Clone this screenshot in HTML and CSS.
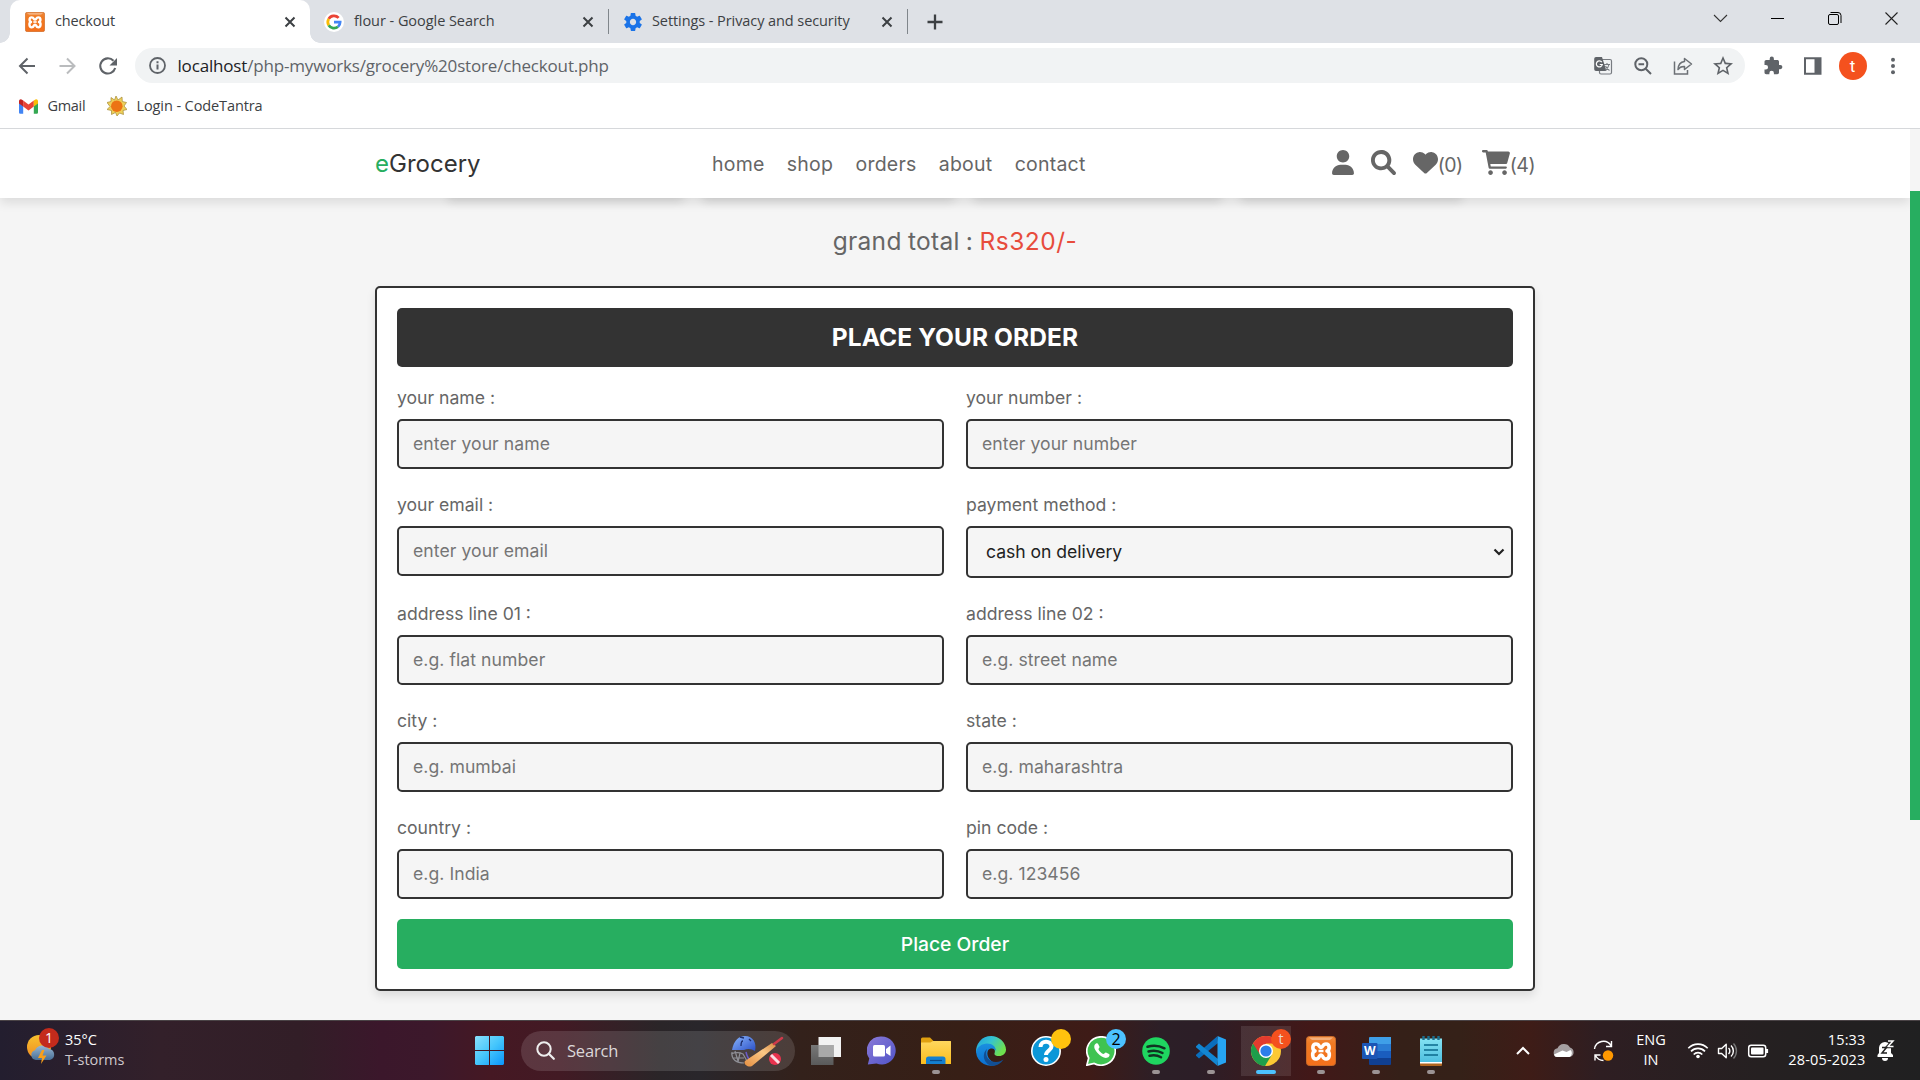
FILE: index.html
```html
<!DOCTYPE html>
<html lang="en">
<head>
<meta charset="utf-8">
<title>checkout</title>
<link rel="stylesheet" href="styles.css">
</head>
<body>
<svg class="defs" width="0" height="0">
  <defs>
    <linearGradient id="xg" x1="0" y1="0" x2="0" y2="1"><stop offset="0" stop-color="#f08a3c"/><stop offset=".25" stop-color="#f07a22"/><stop offset="1" stop-color="#f4701c"/></linearGradient>
    <linearGradient id="win" x1="0" y1="0" x2="1" y2="1"><stop offset="0" stop-color="#8ae0fc"/><stop offset=".5" stop-color="#45c6fc"/><stop offset="1" stop-color="#0a95fb"/></linearGradient>
    <linearGradient id="sunny" x1="0" y1="0" x2="0" y2="1"><stop offset="0" stop-color="#f8c22e"/><stop offset="1" stop-color="#ef8a22"/></linearGradient>
    <linearGradient id="cloudg" x1="0" y1="0" x2="0" y2="1"><stop offset="0" stop-color="#9ab8d4"/><stop offset="1" stop-color="#476e96"/></linearGradient>
    <linearGradient id="helmet" x1="0" y1="0" x2="1" y2="1"><stop offset="0" stop-color="#8ab6fb"/><stop offset="1" stop-color="#2b50c8"/></linearGradient>
    <linearGradient id="bat" x1="0" y1="1" x2="1" y2="0"><stop offset="0" stop-color="#e58f42"/><stop offset=".6" stop-color="#fbc886"/><stop offset="1" stop-color="#d98b45"/></linearGradient>
    <linearGradient id="grey" x1="0" y1="0" x2="0" y2="1"><stop offset="0" stop-color="#787878"/><stop offset="1" stop-color="#5a5a5a"/></linearGradient>
    <linearGradient id="chatg" x1="0" y1="0" x2="1" y2="1"><stop offset="0" stop-color="#8b7ad8"/><stop offset="1" stop-color="#5054c8"/></linearGradient>
    <linearGradient id="folder" x1="0" y1="0" x2="0" y2="1"><stop offset="0" stop-color="#ffd75e"/><stop offset="1" stop-color="#fbbd1e"/></linearGradient>
    <linearGradient id="edge1" x1="0" y1="0" x2="1" y2=".5"><stop offset="0" stop-color="#1f9fe0"/><stop offset=".5" stop-color="#35c4d0"/><stop offset="1" stop-color="#6fe04e"/></linearGradient>
    <linearGradient id="edge2" x1="0" y1="0" x2="0" y2="1"><stop offset="0" stop-color="#1a8fe0"/><stop offset="1" stop-color="#0b6fd0"/></linearGradient>
    <linearGradient id="note" x1="0" y1="0" x2="0" y2="1"><stop offset="0" stop-color="#84e2f2"/><stop offset="1" stop-color="#4fbfe0"/></linearGradient>
    <symbol id="xampp" viewBox="0 0 30 30">
      <rect x=".5" y=".5" width="29" height="29" rx="3" fill="url(#xg)" stroke="#c96a28"/>
      <path d="M3 1.5h24L24 4H6z" fill="#fff" opacity=".35"/>
      <path d="M10 8c-4 0-4 6-1 7-3.500 1-3 8 1 8 4 0 2.500-4 5-4s1 4 5 4 4.500-7 1-8c3-1 3-7-1-7-4 0-2.500 3.500-5 3.500S14 8 10 8z" fill="none" stroke="#fff" stroke-width="3.600" stroke-linejoin="round"/>
      <path d="M12.500 15h5" stroke="#fff" stroke-width="2.500"/>
    </symbol>
    <symbol id="x" viewBox="0 0 12 12"><path d="M1.500 1.500l9 9M10.500 1.500l-9 9" stroke="#3c4043" stroke-width="2"/></symbol>
  </defs>
</svg>

<div class="tabstrip">
  <div class="tab tab-active">
    <svg class="fav" width="20" height="20"><use href="#xampp"/></svg>
    <span class="tab-title">checkout</span>
    <svg width="12" height="12"><use href="#x"/></svg>
  </div>
  <div class="tab tab-line">
    <svg class="fav" width="20" height="20" viewBox="0 0 20 20"><circle cx="10" cy="10" r="10" fill="#fff"/><g fill="none" stroke-width="2.800"><path d="M14.600 5.900A6.200 6.200 0 0 0 4.700 6.900" stroke="#ea4335"/><path d="M4.700 6.900a6.200 6.200 0 0 0 0 6.300" stroke="#fbbc05"/><path d="M4.700 13.200a6.200 6.200 0 0 0 9.300 1.500" stroke="#34a853"/><path d="M14 14.700a6.200 6.200 0 0 0 2.100-4.500H10" stroke="#4285f4"/></g></svg>
    <span class="tab-title">flour - Google Search</span>
    <svg width="12" height="12"><use href="#x"/></svg>
  </div>
  <div class="tab tab-line">
    <svg class="fav" width="18" height="18" viewBox="2 2 20 20"><path fill="#1a73e8" d="M19.430 12.980c.04-.32.07-.64.07-.98s-.03-.66-.07-.98l2.110-1.650c.19-.15.24-.42.12-.64l-2-3.460c-.12-.22-.39-.3-.61-.22l-2.490 1c-.52-.4-1.080-.73-1.690-.98l-.38-2.650C14.460 2.180 14.250 2 14 2h-4c-.25 0-.46.18-.49.42l-.38 2.650c-.61.25-1.170.59-1.690.98l-2.490-1c-.23-.09-.49 0-.61.22l-2 3.460c-.13.22-.07.49.12.64l2.110 1.650c-.04.32-.07.65-.07.98s.03.66.07.98l-2.110 1.650c-.19.15-.24.42-.12.64l2 3.460c.12.22.39.3.61.22l2.490-1c.52.4 1.080.73 1.690.98l.38 2.650c.03.24.24.42.49.42h4c.25 0 .46-.18.49-.42l.38-2.650c.61-.25 1.170-.59 1.690-.98l2.490 1c.23.09.49 0 .61-.22l2-3.460c.12-.22.07-.49-.12-.64l-2.110-1.650zM12 15.500c-1.930 0-3.500-1.570-3.500-3.500s1.570-3.500 3.500-3.500 3.500 1.570 3.500 3.500-1.570 3.500-3.500 3.500z"/></svg>
    <span class="tab-title">Settings - Privacy and security</span>
    <svg width="12" height="12"><use href="#x"/></svg>
  </div>
  <svg class="newtab" width="16" height="16" viewBox="0 0 16 16"><path d="M8 .5v15M.5 8h15" stroke="#3c4043" stroke-width="2.300"/></svg>
  <div class="win-controls">
    <svg width="57" height="37"><path d="M22 15l6.500 6.500L35 15" fill="none" stroke="#333" stroke-width="1.100"/></svg>
    <svg width="57" height="37"><path d="M22 18.500h13" stroke="#000" stroke-width="1"/></svg>
    <svg width="57" height="37"><rect x="22.500" y="14.500" width="10" height="10" rx="1.500" fill="none" stroke="#000"/><path d="M24.500 12.500h7.500a3 3 0 0 1 3 3v7.500" fill="none" stroke="#000"/></svg>
    <svg width="57" height="37"><path d="M22.500 12.500l12 12M34.500 12.500l-12 12" stroke="#222" stroke-width="1.100"/></svg>
  </div>
</div>

<div class="toolbar">
  <svg class="nav-btn" viewBox="0 0 40 40"><path d="M35 20H20.500M27.500 12.500L20 20l7.500 7.500" fill="none" stroke="#5f6368" stroke-width="2"/></svg>
  <svg class="nav-btn" viewBox="0 0 40 40"><path d="M19.500 20H34M27 12.500l7.500 7.500-7.500 7.500" fill="none" stroke="#babcbe" stroke-width="2"/></svg>
  <svg class="nav-btn" viewBox="-1 0 40 40"><path d="M32.500 14.800A7.600 7.600 0 1 0 34.200 22" fill="none" stroke="#5f6368" stroke-width="2.100"/><path d="M36 12v7.500h-7.500z" fill="#5f6368"/></svg>
  <div class="omnibox">
    <svg width="17" height="17" viewBox="0 0 17 17"><circle cx="8.500" cy="8.500" r="7.500" fill="none" stroke="#5f6368" stroke-width="1.800"/><path d="M8.500 7.500v5M8.500 4.200v2" stroke="#5f6368" stroke-width="2"/></svg>
    <span class="url"><b>localhost</b>/php-myworks/grocery%20store/checkout.php</span>
    <svg class="obi" viewBox="0 0 20 20"><rect x="6.500" y="3.500" width="12" height="14.500" rx="1.500" fill="none" stroke="#777b80" stroke-width="1.200"/><path d="M3 1h6l4.500 14H3a1.800 1.800 0 0 1-1.800-1.800V2.800A1.800 1.800 0 0 1 3 1z" fill="#5f6368"/><path d="M8.800 6.200a3 3 0 1 0 .5 2.300H6.700" fill="none" stroke="#fff" stroke-width="1.200"/><path d="M11 8.500h6M14 7v1.500M16 8.500c-.5 3-2 4.500-4 6M12.500 10c1 2 2.500 3.500 4 4.500" fill="none" stroke="#777b80" stroke-width="1.100"/></svg>
    <svg class="obi" viewBox="0 0 20 20"><circle cx="8.300" cy="8.300" r="6" fill="none" stroke="#5f6368" stroke-width="2"/><path d="M5.500 8.300h5.600M12.700 12.700l5.300 5.300" stroke="#5f6368" stroke-width="2"/></svg>
    <svg class="obi" viewBox="0 0 20 20"><path d="M1.500 5.500v12.500h13v-4" fill="none" stroke="#6c7075" stroke-width="1.500"/><path d="M11.500 2.500l7 5.500-7 5.500v-3c-3-.2-5 .7-6.500 3 .2-4.500 2-7.500 6.500-8z" fill="none" stroke="#6c7075" stroke-width="1.500" stroke-linejoin="round"/></svg>
    <svg class="obi" viewBox="2 2 20 20"><path fill="#5f6368" d="M22 9.240l-7.190-.62L12 2 9.190 8.630 2 9.240l5.460 4.730L5.820 21 12 17.270 18.180 21l-1.630-7.030L22 9.240zM12 15.400l-3.760 2.270 1-4.280-3.320-2.880 4.380-.38L12 6.100l1.710 4.040 4.380.38-3.320 2.880 1 4.280L12 15.400z"/></svg>
  </div>
  <div class="tool-right">
    <svg width="40" height="20" viewBox="-8.700 1.500 40 20"><path fill="#5f6368" d="M18.600 10.500h-1.300V7.200c0-1-.8-1.700-1.700-1.700h-3.400V4.200a2.100 2.100 0 0 0-4.200 0v1.300H4.500c-.9 0-1.700.8-1.700 1.700v3.200h1.300a2.250 2.250 0 0 1 0 4.500H2.800V18c0 1 .8 1.700 1.700 1.700h3.200v-1.300a2.250 2.250 0 0 1 4.500 0v1.300h3.400c.9 0 1.700-.8 1.700-1.700v-3.300h1.300a2.100 2.100 0 0 0 0-4.200z"/></svg>
    <svg width="40" height="20"><path d="M12 2.300h15.500v15.400H12z" fill="none" stroke="#5f6368" stroke-width="2"/><path d="M21.500 2h6v16h-6z" fill="#5f6368"/></svg>
    <span class="avatar">t</span>
    <svg width="40" height="20"><g fill="#5f6368"><circle cx="20" cy="3.800" r="2"/><circle cx="20" cy="10" r="2"/><circle cx="20" cy="16.200" r="2"/></g></svg>
  </div>
</div>

<div class="bookmarks">
  <svg width="19" height="15" viewBox="0 0 19 15"><path d="M0 2v11.500a1.200 1.200 0 0 0 1.200 1.200h3V5.500z" fill="#4285f4"/><path d="M19 2v11.500a1.200 1.200 0 0 1-1.200 1.200h-3V5.500z" fill="#34a853"/><path d="M4.200 1.600v6l5.300 4 5.300-4v-6l-5.300 4z" fill="#ea4335"/><path d="M0 2.200C0 .2 2 -.4 3.400.9l.8.7v6L0 4.500z" fill="#c5221f"/><path d="M19 2.200C19 .2 17-.4 15.600.9l-.8.7v6L19 4.500z" fill="#fbbc04"/></svg>
  <span class="bm-gmail">Gmail</span>
  <svg width="20" height="20" viewBox="0 0 20 20"><path d="M9 0l2 4 4-3 .3 4.500 4.200 1-2.500 3.500 3 3.500-4 1 .5 4-4-1.500-2.500 3-1.500-3.500-4 2 0-4L0 13.500l3-3L0 6.500l4-1V1.500L7.500 4z" fill="#eed05a" stroke="#a58a35" stroke-width=".7"/><circle cx="9.800" cy="10.200" r="5.800" fill="#ec7414"/></svg>
  <span class="bm-login">Login - CodeTantra</span>
</div>

<div class="viewport">
  <div class="page">
    <header class="header">
      <div class="header-in">
        <div class="logo"><span>e</span>Grocery</div>
        <nav class="nav"><a>home</a><a>shop</a><a>orders</a><a>about</a><a>contact</a></nav>
        <div class="icons">
          <svg width="22" height="25" viewBox="0 0 448 512"><path d="M224 256c70.700 0 128-57.310 128-128s-57.300-128-128-128C153.300 0 96 57.310 96 128S153.300 256 224 256zM274.700 304H173.300C77.610 304 0 381.600 0 477.300c0 19.140 15.520 34.670 34.660 34.670h378.700C432.500 512 448 496.500 448 477.300C448 381.600 370.400 304 274.700 304z"/></svg>
          <svg class="i-search" width="25" height="25" viewBox="0 0 512 512"><path d="M500.300 443.700l-119.700-119.700c27.220-40.410 40.650-90.900 33.460-144.700C401.800 87.790 326.800 13.320 235.200 1.723C99.010-15.510-15.510 99.010 1.724 235.200c11.600 91.640 86.080 166.700 177.600 178.900c53.800 7.189 104.300-6.236 144.700-33.460l119.700 119.700c15.620 15.620 40.950 15.620 56.570 0C515.900 484.700 515.900 459.300 500.300 443.700zM79.100 208c0-70.580 57.420-128 128-128s128 57.420 128 128c0 70.580-57.420 128-128 128S79.100 278.600 79.100 208z"/></svg>
          <a><svg width="25" height="25" viewBox="0 0 512 512"><path d="M0 190.900V185.100C0 115.200 50.520 55.580 119.400 44.100C164.100 36.510 211.400 51.370 244 84.020L256 96L267.100 84.020C300.600 51.370 347 36.510 392.600 44.100C461.500 55.580 512 115.200 512 185.100V190.900C512 232.400 494.800 272.100 464.400 300.400L283.700 469.100C276.200 476.100 266.300 480 256 480C245.700 480 235.800 476.100 228.300 469.100L47.590 300.400C17.230 272.100 0 232.400 0 190.900z"/></svg><span>(0)</span></a>
          <a class="cart"><svg width="28" height="25" viewBox="0 0 576 512"><path d="M96 0C107.500 0 117.400 8.190 119.600 19.510L121.100 32H541.800C562.100 32 578.300 52.250 572.600 72.660L518.600 264.700C514.700 278.500 502.100 288 487.800 288H170.700L179.900 336H488C501.300 336 512 346.700 512 360C512 373.300 501.300 384 488 384H159.100C148.500 384 138.600 375.800 136.400 364.500L76.140 48H24C10.750 48 0 37.250 0 24C0 10.750 10.750 0 24 0H96zM128 464C128 437.500 149.500 416 176 416C202.500 416 224 437.500 224 464C224 490.500 202.500 512 176 512C149.500 512 128 490.500 128 464zM512 464C512 490.500 490.500 512 464 512C437.500 512 416 490.500 416 464C416 437.500 437.500 416 464 416C490.500 416 512 437.500 512 464z"/></svg><span>(4)</span></a>
        </div>
      </div>
    </header>
    <div class="cards"><div></div><div></div><div></div><div></div></div>
    <p class="total">grand total : <span>Rs320/-</span></p>
    <form class="order">
      <h3>PLACE YOUR ORDER</h3>
      <div class="fields">
        <label>your name :<input type="text" placeholder="enter your name"></label>
        <label>your number :<input type="text" placeholder="enter your number"></label>
        <label>your email :<input type="text" placeholder="enter your email"></label>
        <label>payment method :<span class="select">cash on delivery<svg width="12" height="8" viewBox="0 0 12 8"><path d="M1.500 1.500L6 6l4.500-4.500" fill="none" stroke="#222" stroke-width="2.200"/></svg></span></label>
        <label>address line 01 :<input type="text" placeholder="e.g. flat number"></label>
        <label>address line 02 :<input type="text" placeholder="e.g. street name"></label>
        <label>city :<input type="text" placeholder="e.g. mumbai"></label>
        <label>state :<input type="text" placeholder="e.g. maharashtra"></label>
        <label>country :<input type="text" placeholder="e.g. India"></label>
        <label>pin code :<input type="text" placeholder="e.g. 123456"></label>
      </div>
      <button type="button">Place Order</button>
    </form>
  </div>
  <div class="scroll"><div class="thumb"></div></div>
</div>

<div class="taskbar">
  <div class="weather">
    <span class="w-icon">
      <svg width="29" height="31" viewBox="0 0 29 31"><circle cx="12" cy="13" r="12" fill="url(#sunny)"/><path d="M9 26a5 5 0 0 1-1-9.800 8 8 0 0 1 14-1.200 5.600 5.600 0 0 1 1 11z" fill="url(#cloudg)"/><path d="M15 16l-4 8h4l-1 6 5.500-8.500h-4l2-5.500z" fill="#f9a01b"/></svg>
      <i class="badge b-red">1</i>
    </span>
    <span class="w-text">35°C<br><em>T-storms</em></span>
  </div>
  <div class="cell"><svg width="29" height="29" viewBox="0 0 29 29"><path d="M1 0h13v14H0V1zM15 0h13l1 1v13H15zM0 15h14v14H1l-1-1zM15 15h14v13l-1 1H15z" fill="url(#win)"/></svg></div>
  <div class="search">
    <svg width="19" height="19" viewBox="0 0 19 19"><circle cx="8" cy="8" r="6.700" fill="none" stroke="#eee" stroke-width="2"/><path d="M12.800 12.800l5 5" stroke="#eee" stroke-width="2.200" stroke-linecap="round"/></svg>
    <span>Search</span>
    <svg width="54" height="32" viewBox="0 0 54 32"><path d="M2 17c-1 8 5 11 12 11M1 19c5-2 8-2 12 0l4 7M5 16l3 10M3 23h11M10 18l-2 9" fill="none" stroke="#8f8f96" stroke-width="1.200"/><path d="M2 15C4 5 9 1 15 1c8 0 12 7 10 15-3-2-7-3-11-1z" fill="url(#helmet)"/><path d="M11 11c0-4 1-5 2-5M10 2l4 1M19 4l2 2" stroke="#1c2c6a" stroke-width="1.300" fill="none"/><path d="M16 17c1 5 3 8 6 11" stroke="#6a5ac8" stroke-width="1.500" fill="none"/><path d="M42 8l4 3-24 20c-4 2-9-2-7-5z" fill="url(#bat)"/><path d="M44 9l8-6" stroke="#cf3a4a" stroke-width="2.500" stroke-linecap="round"/><circle cx="45" cy="24" r="6" fill="#e8324e"/><path d="M41 20l8 8" stroke="#fbdce2" stroke-width="3"/></svg>
  </div>
  <div class="cell"><svg width="30" height="28" viewBox="0 0 30 28"><path d="M7.500 0H30v20H7.500z" fill="#f2f2f2"/><path d="M0 8h22.500v20H0z" fill="url(#grey)"/><path d="M7.500 8h15v12h-15z" fill="#a9a9a9"/></svg></div>
  <div class="cell"><svg width="29" height="29" viewBox="0 0 29 29"><path d="M14.500.5a14 14 0 1 1-5 27L.8 28.500l1.500-6A14 14 0 0 1 14.500.5z" fill="url(#chatg)"/><rect x="6" y="9" width="12" height="11.500" rx="1.500" fill="#fff"/><path d="M19 13l4.500-3.500v10.500L19 17z" fill="#fff"/></svg></div>
  <div class="cell"><svg width="30" height="28" viewBox="0 0 30 28"><path d="M0 2a1.500 1.500 0 0 1 1.500-1.500H9l3.500 3.500H30v8H0z" fill="#e0a010"/><path d="M0 5.500h9.500L12 4h17a1 1 0 0 1 1 1v22H0z" fill="url(#folder)"/><path d="M5 27v-5a2.500 2.500 0 0 1 2.500-2.500h14.500a2.500 2.500 0 0 1 2.500 2.500v5z" fill="#1580d0"/><path d="M9 23.500h12" stroke="#0b4a88" stroke-width="1.200"/></svg><i class="dot"></i></div>
  <div class="cell"><svg width="30" height="30" viewBox="0 0 30 30"><path d="M15 0a15 15 0 0 1 15 13.500c0 4-3 6.500-7 6.500-3 0-5-1-4.500-2.500C20 13 17 9.500 12 9.500 6 9.500 2 13 .2 17A15 15 0 0 1 15 0z" fill="url(#edge1)"/><path d="M0 16C1 11 6 7.500 11 7.500c5.500 0 9 3.500 9 7.500-1.500-3-6-3.500-8-.5-2.500 5.500 2.500 12 10 13.500A15 15 0 0 1 0 16z" fill="url(#edge2)"/><path d="M11 13c-3 7 2 13 9 13 3 0 6-1.500 7.500-2.500A15 15 0 0 1 17 30C8 29 5 18 11 13z" fill="#124f94"/></svg></div>
  <div class="cell"><svg width="30" height="30" viewBox="0 0 30 30"><circle cx="15" cy="15" r="14.200" fill="#0c97d8" stroke="#fff" stroke-width="1.600"/><path d="M9.500 11c0-7 11-7 11-.5 0 4-5.500 4-5.500 8.500" fill="none" stroke="#fff" stroke-width="4"/><circle cx="15" cy="23.500" r="2.500" fill="#fff"/></svg><i class="badge b-yellow"></i></div>
  <div class="cell"><svg width="30" height="30" viewBox="0 0 30 30"><path d="M15 .8a14.200 14.200 0 1 1-6.800 26.600L.8 29.200l1.900-7.200A14.200 14.200 0 0 1 15 .8z" fill="#3fc351" stroke="#fff" stroke-width="1.700"/><path d="M10 7.500c-2.500 1.500-2.500 5 1.500 9.500s9 6.500 11.500 3.500c.8-1 .8-2 0-2.500l-3-1.500c-.8-.3-1.800 1.500-2.500 1.500-1.500 0-5-3.500-5-5 0-.7 1.300-1.500 1-2.300l-1.500-3c-.3-.6-1.200-.7-2-.2z" fill="#fff"/></svg><i class="badge b-blue">2</i></div>
  <div class="cell"><svg width="28" height="28" viewBox="0 0 28 28"><circle cx="14" cy="14" r="13.800" fill="#1fd660"/><path d="M5.500 9.800c6-1.800 12-1 17 1.500M6.500 14.500c5-1.500 10-.8 14 1.500M7.500 18.800c4-1 8-.6 11.500 1.500" fill="none" stroke="#132" stroke-width="2.500" stroke-linecap="round"/></svg><i class="dot"></i></div>
  <div class="cell"><svg width="30" height="30" viewBox="0 0 30 30"><path d="M22 7L3 22.500.3 20a1 1 0 0 1 0-1.500L21 .5z" fill="#0a6ebd"/><path d="M22 23L3 7.500.3 10a1 1 0 0 0 0 1.500L21 29.500z" fill="#1286d2"/><path d="M21.500 0L30 3.500v23L21.500 30z" fill="#26a4f2"/></svg><i class="dot"></i></div>
  <div class="cell cell-on"><svg width="30" height="30" viewBox="0 0 30 30"><circle cx="15" cy="15" r="15" fill="#fcc934"/><path d="M15 15L2 7.500A15 15 0 0 0 14 30l7-11.500z" fill="#1e9e4b"/><path d="M2 7.500A15 15 0 0 1 28 7.500H15L9 18.500z" fill="#e33b2e"/><circle cx="15" cy="15" r="7" fill="#fff"/><circle cx="15" cy="15" r="5.600" fill="#2b7de9"/></svg><i class="badge b-orange">t</i><i class="dot dot-on"></i></div>
  <div class="cell"><svg width="30" height="30"><use href="#xampp"/></svg><i class="dot"></i></div>
  <div class="cell"><svg width="29" height="28" viewBox="0 0 29 28"><path d="M7 1a1 1 0 0 1 1-1h21v7H7z" fill="#3f9fe8"/><path d="M7 7h22v7H7z" fill="#2a7cd4"/><path d="M7 14h22v7H7z" fill="#1a5dbe"/><path d="M7 21h22v6a1 1 0 0 1-1 1H8a1 1 0 0 1-1-1z" fill="#103f91"/><rect y="6" width="15.500" height="16" rx="1" fill="#1b55b5"/><text x="7.700" y="18" text-anchor="middle" class="word-w">W</text></svg><i class="dot"></i></div>
  <div class="cell"><svg width="22" height="30" viewBox="0 0 22 30"><path d="M0 25h22v4a1 1 0 0 1-1 1H1a1 1 0 0 1-1-1z" fill="#b0651f"/><path d="M0 25h22v2.500H0z" fill="#fff"/><path d="M0 2.500h22V26H0z" fill="url(#note)"/><path d="M4 9h14M4 14h14M4 19h14" stroke="#0b6a8c" stroke-width="1.600"/><path d="M3.500 0v4M8.500 0v4M13.500 0v4M18.500 0v4" stroke="#1b6f8e" stroke-width="2.400"/></svg><i class="dot"></i></div>
  <div class="tray">
    <svg width="40" height="30"><path d="M14 18l6-6 6 6" fill="none" stroke="#fff" stroke-width="2"/></svg>
    <svg width="40" height="30"><path d="M14 21a4.500 4.500 0 0 1 .5-8.800 7 7 0 0 1 12.500-.8 5 5 0 0 1 0 9.600z" fill="#a59fa1"/><path d="M11 18.500l8.500-4 4 1.500 4-2a4.300 4.300 0 0 1-1 7H14a3 3 0 0 1-3-2.500z" fill="#fff"/></svg>
    <svg width="40" height="30"><path d="M11.500 13a9 9 0 0 1 16.500-3.500M28.500 5v5.500H23M12 24.500V19h5.500M12.500 19.500a9 9 0 0 0 8 5" fill="none" stroke="#fff" stroke-width="1.400"/><circle cx="25" cy="19.500" r="5.200" fill="#ff9800"/></svg>
    <span class="lang">ENG<br>IN</span>
    <svg width="30" height="30"><g fill="none" stroke="#fff" stroke-width="1.600"><path d="M5.300 12.200a13.600 13.600 0 0 1 19.400 0M8 15.400a9.600 9.600 0 0 1 14 0M10.700 18.500a5.800 5.800 0 0 1 8.600 0"/></g><circle cx="15" cy="20.500" r="1.800" fill="#fff"/></svg>
    <svg width="30" height="30"><path d="M5.500 12.500h3.200l4.500-4.200v13.400l-4.500-4.200H5.500z" fill="none" stroke="#fff" stroke-width="1.400" stroke-linejoin="round"/><path d="M15.500 12a4 4 0 0 1 0 6M18 9.500a7.600 7.600 0 0 1 0 11" fill="none" stroke="#fff" stroke-width="1.400"/><path d="M20.500 7.500a11 11 0 0 1 0 15" fill="none" stroke="#777" stroke-width="1.400"/></svg>
    <svg width="30" height="30"><rect x="5.700" y="9.200" width="17" height="11.600" rx="2.500" fill="none" stroke="#fff" stroke-width="1.500"/><rect x="8" y="11.500" width="12.500" height="7" rx="1" fill="#fff"/><path d="M24 13v4" stroke="#fff" stroke-width="2.200"/></svg>
    <span class="clock">15:33<br>28-05-2023</span>
    <svg width="40" height="30" viewBox="1 1 40 30"><path d="M12.500 22v-2l1.500-2v-5a6 6 0 0 1 12 0v5l2 2v2z" fill="#fff"/><path d="M17 23h6a3 3 0 0 1-6 0z" fill="#fff"/><path d="M23 6h5l-5 5.500h5.500" fill="none" stroke="#222" stroke-width="3.500"/><path d="M23 6h5l-5 5.500h5.500" fill="none" stroke="#fff" stroke-width="1.500"/><path d="M17 12.500h4.500l-4.500 5.500H22" fill="none" stroke="#222" stroke-width="1.500"/></svg>
  </div>
</div>
</body>
</html>
```
FILE: styles.css
```css
* { box-sizing: border-box; }
html, body { height: 100%; }
body {
  margin: 0;
  display: flex;
  flex-direction: column;
  overflow: hidden;
  background: #fff;
  font-family: "Open Sans", "Noto Sans", sans-serif;
  color: #3c4043;
}
svg { display: block; flex: none; }
.defs { position: absolute; }

/* browser chrome */
.tabstrip { display: flex; height: 43px; flex: none; background: #dee1e6; padding-left: 10px; align-items: center; }
.tab { width: 299px; height: 43px; display: flex; align-items: center; padding: 0 15px 0 14px; font-size: 14.5px; letter-spacing: -.05px; }
.tab-active {
  width: 300px; padding: 0 14px 0 15px; background: #fff; border-radius: 10px 10px 0 0; position: relative; letter-spacing: -.16px;
}
.tab-active::before, .tab-active::after {
  content: ""; position: absolute; bottom: 0; width: 10px; height: 10px;
}
.tab-active::before { left: -10px; background: radial-gradient(circle at 0 0, transparent 9.5px, #fff 10px); }
.tab-active::after { right: -10px; background: radial-gradient(circle at 100% 0, transparent 9.5px, #fff 10px); }
.tab-line { background: linear-gradient(#80868b, #80868b) right center / 1px 25px no-repeat; }
.tab-title { flex: 1; margin-left: 10px; white-space: nowrap; padding-bottom: 3px; }
.tab:nth-child(3) { padding-left: 15px; letter-spacing: -.08px; }
.newtab { margin-left: 19px; }
.win-controls { display: flex; margin-left: auto; align-self: flex-start; }
.toolbar { display: flex; height: 45px; flex: none; align-items: center; }
.nav-btn { width: 40px; height: 40px; }
.nav-btn:nth-child(3) { margin-right: 15px; }
.omnibox { width: 1610px; height: 35px; border-radius: 18px; background: #f1f3f4; display: flex; align-items: center; padding: 0 12px 0 14px; }
.url { flex: 1; margin-left: 11.5px; font-size: 17px; letter-spacing: -.17px; color: #5f6368; padding-bottom: 1px; }
.url b { font-weight: 400; color: #202124; }
.obi { width: 20px; height: 20px; margin-left: 20px; }
.tool-right { display: flex; align-items: center; padding-left: 7.5px; }
.avatar { width: 28px; height: 28px; margin: 0 6px; border-radius: 50%; background: #f4511e; color: #fff; text-align: center; font: 17px/28px "Roboto", sans-serif; }
.bookmarks { display: flex; align-items: center; height: 41px; padding: 0 0 4px 19px; flex: none; border-bottom: 1px solid #d6d8db; font-size: 14.5px; letter-spacing: -.3px; }
.bm-gmail { margin: 0 20px 0 9.5px; width: 39px; padding-bottom: 2px; }
.bm-login { margin-left: 10px; letter-spacing: -.1px; padding-bottom: 2px; }

/* web page */
.viewport { flex: 1; display: flex; min-height: 0; }
.page { flex: 1; background: #f5f5f5; font-family: "Inter", "Roboto", sans-serif; color: #666; overflow: hidden; }
.scroll { width: 10px; background: #f5f5f5; padding-top: 62px; }
.thumb { height: 629px; background: #27ae60; }
.header { height: 69px; background: #fff; box-shadow: 0 5px 10px rgba(0, 0, 0, .1); position: relative; z-index: 1; }
.header-in { width: 1160px; height: 69px; margin: 0 auto; display: flex; align-items: center; }
.logo { width: 337px; font-size: 24px; letter-spacing: 0; color: #333; }
.logo span { color: #27ae60; }
.nav { display: flex; gap: 22.3px; font-size: 19.5px; letter-spacing: .22px; }
.icons { margin-left: auto; display: flex; align-items: center; fill: #666; padding-bottom: 2px; }
.icons a { display: flex; align-items: center; margin-left: 18px; font-size: 19.5px; letter-spacing: -.5px; }
.icons .cart { margin-left: 19px; }
.icons a span { padding-top: 4px; }
.i-search { margin-left: 17px; margin-right: -1px; }
.cards { display: grid; grid-template-columns: 237px 253px 249px 223px; gap: 18px; width: 1016px; height: 0; margin: 0 auto; }
.cards div { height: 60px; margin-top: -61px; border-radius: 5px; background: #fff; box-shadow: 0 5px 10px rgba(0, 0, 0, .1); }
.total { margin: 28px 0 0; text-align: center; font-size: 24.5px; line-height: 30px; letter-spacing: .3px; word-spacing: -1px; }
.total span { color: #e74c3c; letter-spacing: .5px; }
.order {
  width: 1160px; height: 705px; margin: 30px auto 0; padding: 20px; background: #fff;
  border: 2px solid #333; border-radius: 5px; box-shadow: 0 5px 10px rgba(0, 0, 0, .1);
}
.order h3 { margin: 0; height: 59px; background: #333; border-radius: 5px; color: #fff; text-align: center; font-size: 24.5px; line-height: 59px; letter-spacing: .08px; }
.fields { display: grid; grid-template-columns: 547px 547px; column-gap: 22px; row-gap: 25px; padding-top: 20px; }
.fields label { font-size: 17.6px; line-height: 22px; }
.fields input, .select {
  display: block; width: 100%; height: 50px; margin-top: 10px; padding: 0 14px 1px; border: 2px solid #333; border-radius: 5px;
  background: #f5f5f5; font: inherit; letter-spacing: .06px; outline: none;
}
.fields input::placeholder { color: #757575; opacity: 1; }
.fields .select { display: flex; height: 52px; align-items: center; justify-content: space-between; padding: 0 6px 0 18px; color: #222; letter-spacing: -.04px; }
.order button { display: block; width: 100%; height: 50px; margin-top: 20px; border: 0; border-radius: 5px; background: #27ae60; color: #fff; font: 500 19.3px "Inter", sans-serif; }

/* taskbar */
.taskbar {
  height: 60px; flex: none; display: flex; align-items: center; color: #fff; border-top: 1px solid #4a4346;
  background: linear-gradient(90deg, #231e2f 0, #33202a 160px, #321e27 300px, #3b172b 380px, #3c182b 430px, #451823 490px, #421a24 560px, #2a2528 660px, #29262b 700px, #33211b 800px, #371f16 960px, #3e1b17 1090px, #2c1f27 1160px, #2c1e27 1200px, #421818 1310px, #352018 1400px, #352118 1460px, #3e1c17 1530px, #2e1e22 1600px, #252021 1760px, #202021 1920px);
}
.weather { width: 461.5px; padding-left: 27px; display: flex; }
.w-icon { position: relative; width: 38px; padding-top: 4px; }
.w-text, .lang, .clock { font-size: 14.5px; line-height: 20px; letter-spacing: -.05px; padding-bottom: 2px; }
.w-text em { font-style: normal; color: #cfc8cc; }
.badge { position: absolute; width: 20px; height: 20px; border-radius: 50%; font: 14px/20px "Open Sans", sans-serif; text-align: center; }
.b-red { background: #c42b1c; left: 12px; top: -2px; }
.cell { width: 55px; height: 59px; display: flex; align-items: center; justify-content: center; position: relative; }
.cell .badge { left: 32.5px; top: 8px; }
.b-yellow { background: #ffc20e; }
.b-blue { background: #4cc2ff; color: #000; font-size: 16px; }
.b-orange { background: #f4511e; color: #e8d8d4; }
.dot { position: absolute; left: 23.5px; top: 49px; width: 8px; height: 4px; border-radius: 2px; background: #9b9394; }
.dot-on { left: 17.5px; width: 20px; background: #4cc2ff; }
.cell-on { background: linear-gradient(rgba(255, 255, 255, .1), rgba(255, 255, 255, .1)) center / 50px 50px no-repeat; }
.search { width: 274px; height: 40px; margin: 0 3.5px 0 4.5px; border-radius: 20px; background: rgba(255, 255, 255, .13); display: flex; align-items: center; padding: 0 11px 0 15px; }
.search span { flex: 1; margin-left: 12px; font-size: 16.5px; letter-spacing: -.2px; color: #dcd8d9; padding-bottom: 1px; }
.word-w { font: 700 12px "Open Sans", sans-serif; fill: #fff; }
.tray { display: flex; align-items: center; padding-left: 44.5px; }
.lang { width: 60px; padding-right: 4px; text-align: center; }
.clock { width: 92.5px; text-align: right; letter-spacing: .15px; }
```
